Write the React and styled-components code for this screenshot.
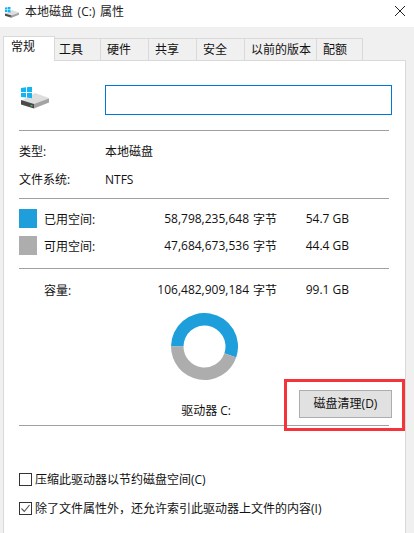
import React from "react";
import styled, { createGlobalStyle } from "styled-components";

const Global = createGlobalStyle`
  html, body { margin: 0; padding: 0; background: #fff; height: 533px; overflow: hidden; }
  body { font-family: "Open Sans", "Noto Sans CJK SC", sans-serif; font-size: 12px; color: #111; }
`;

const Window = styled.div`
  width: 414px; height: 533px; display: flex; flex-direction: column; background: #f0f0f0; overflow: hidden; position: relative;
`;
const TitleBar = styled.div`
  height: 27px; flex: none; background: #fff; display: flex; align-items: center; padding: 0 9px 3px 5px; box-sizing: border-box; gap: 6px;
`;
const TitleText = styled.span`
  flex: 1; font-size: 12px; line-height: 16px; color: #222; word-spacing: 1.5px;
`;
const TabStrip = styled.div`
  height: 33px; flex: none; display: flex; align-items: flex-end; padding: 0 0 0 3px; box-sizing: border-box; position: relative; z-index: 1;
`;
const Tab = styled.div`
  box-sizing: border-box;
  width: ${(p) => p.$w}px;
  height: ${(p) => (p.$active ? 25 : 23)}px;
  margin-bottom: -1px;
  margin-left: ${(p) => (p.$first ? 0 : -1)}px;
  padding-left: ${(p) => p.$pad}px;
  background: ${(p) => (p.$active ? "#fff" : "#f0f0f0")};
  border: 1px solid #d9d9d9;
  border-bottom: ${(p) => (p.$active ? "none" : "1px solid #d9d9d9")};
  font-size: 12px;
  line-height: ${(p) => (p.$active ? 20 : 22)}px;
  white-space: nowrap;
  position: relative;
  z-index: ${(p) => (p.$active ? 2 : 0)};
`;
const Panel = styled.div`
  flex: 1; margin: 0 8px 0 3px; background: #fff; border: 1px solid #d9d9d9; border-bottom: none; padding: 0 12px 0 15px; display: flex; flex-direction: column; box-sizing: border-box;
`;
const Header = styled.div`
  height: 69px; flex: none; display: flex; align-items: flex-start; padding-top: 24px; box-sizing: border-box;
`;
const IconSlot = styled.div`
  width: 86px; flex: none; padding: 2px 0 0 2px; box-sizing: border-box;
`;
const NameInput = styled.div`
  width: 287px; height: 30px; flex: none; box-sizing: border-box; border: 1px solid #0078d7; background: #fff;
`;
const Divider = styled.div`
  height: 1px; background: #a0a0a0; width: 370px; flex: none; margin-top: ${(p) => p.$top || 0}px;
`;
const InfoRow = styled.div`
  display: flex; align-items: center; height: 16px; margin-top: ${(p) => p.$top}px;
`;
const InfoLabel = styled.span`
  width: 86px; flex: none;
`;
const StatsRow = styled.div`
  display: grid; grid-template-columns: 18px 7px 105px 100px 28px 72px; align-items: center; height: 19px; margin-top: ${(p) => p.$top}px; width: 330px;
`;
const Swatch = styled.div`
  width: 18px; height: 19px; background: ${(p) => p.$color};
`;
const Label = styled.span`
  white-space: nowrap; grid-column: 3;
`;
const Bytes = styled.span`
  text-align: right; white-space: nowrap; grid-column: 4;
`;
const Unit = styled.span`
  text-align: right; grid-column: 5; white-space: nowrap;
`;
const Size = styled.span`
  text-align: right; grid-column: 6; white-space: nowrap;
`;
const DonutRow = styled.div`
  display: flex; justify-content: center; margin-top: 14px; width: 371px; flex: none;
`;
const DriveRow = styled.div`
  display: flex; align-items: flex-start; justify-content: flex-end; height: 35px; margin-top: 10px; width: 373px; flex: none;
`;
const DriveLabel = styled.span`
  margin-right: 68px; margin-top: 13px; line-height: 16px;
`;
const CleanButton = styled.div`
  width: 93px; height: 28px; box-sizing: border-box; background: #e1e1e1; border: 1px solid #adadad; text-align: center; line-height: 26px; font-size: 12px;
`;
const CheckRow = styled.div`
  display: flex; align-items: center; gap: 3px; height: 16px; margin-top: ${(p) => p.$top}px; white-space: nowrap;
`;
const Check = styled.div`
  width: 13px; height: 13px; box-sizing: border-box; border: 1px solid #333; background: #fff; display: flex; flex: none;
`;
const Highlight = styled.div`
  position: absolute; left: 284px; top: 379px; width: 121px; height: 52px; box-sizing: border-box; border: 3px solid #f5333a; pointer-events: none; z-index: 5;
`;
const CloseIcon = styled.svg`
  width: 10px; height: 10px; flex: none; margin-bottom: 2px;
`;
const DiskSvg = styled.svg`
  display: block; flex: none;
`;

function DiskIcon({ size }) {
  return (
    <DiskSvg width={size} height={size * 22 / 28} viewBox="0 0 28 22">
      <polygon points="0,14 14,6 28,11 28,13 14,19 0,14" fill="#dedede" />
      <polygon points="13,17 28,11.5 28,15.5 13,21.5" fill="#a3a3a3" />
      <polygon points="0,13 13,17 13,21.5 0,17.5" fill="#4a4a4a" />
      <rect x="9.5" y="18" width="2" height="1.4" fill="#3fbf6a" />
      <polygon points="0,1 5,0.3 5,5 0,5" fill="#13b4f2" />
      <polygon points="6,0.2 11,-0.5 11,5 6,5" fill="#13b4f2" />
      <polygon points="0,6 5,6 5,10.5 0,10" fill="#13b4f2" />
      <polygon points="6,6 11,6 11,11.2 6,10.6" fill="#13b4f2" />
    </DiskSvg>
  );
}

function Donut() {
  const cx = 33.5, cy = 33.5, R = 33.5, r = 21;
  const p = (rad, deg) => {
    const a = (deg * Math.PI) / 180;
    return `${(cx + rad * Math.sin(a)).toFixed(2)} ${(cy - rad * Math.cos(a)).toFixed(2)}`;
  };
  const seg = (a, b, large) =>
    `M${p(R, a)} A${R} ${R} 0 ${large} 1 ${p(R, b)} L${p(r, b)} A${r} ${r} 0 ${large} 0 ${p(r, a)}Z`;
  return (
    <svg width="67" height="67" viewBox="0 0 67 67">
      <path d={seg(270, 469, 1)} fill="#1e9fdc" />
      <path d={seg(109, 270, 0)} fill="#adadad" />
    </svg>
  );
}

const tabs = [
  ["常规", 52, 7],
  ["工具", 47, 4],
  ["硬件", 49, 6],
  ["共享", 49, 6],
  ["安全", 49, 6],
  ["以前的版本", 73, 6],
  ["配额", 47, 6],
];

export default function App() {
  return (
    <Window>
      <Global />
      <TitleBar>
        <DiskIcon size={14} />
        <TitleText>本地磁盘 (C:) 属性</TitleText>
        <CloseIcon viewBox="0 0 10 10">
          <path d="M0 0 L10 10 M10 0 L0 10" stroke="#222" strokeWidth="1" fill="none" />
        </CloseIcon>
      </TitleBar>
      <TabStrip>
        {tabs.map(([t, w, pad], i) => (
          <Tab key={t} $w={w} $pad={pad} $active={i === 0} $first={i === 0}>{t}</Tab>
        ))}
      </TabStrip>
      <Panel>
        <Header>
          <IconSlot><DiskIcon size={28} /></IconSlot>
          <NameInput />
        </Header>
        <Divider />
        <InfoRow $top={12}><InfoLabel>类型:</InfoLabel><span>本地磁盘</span></InfoRow>
        <InfoRow $top={12}><InfoLabel>文件系统:</InfoLabel><span>NTFS</span></InfoRow>
        <Divider $top={11} />
        <StatsRow $top={10}>
          <Swatch $color="#1e9fdc" />
          <Label>已用空间:</Label>
          <Bytes>58,798,235,648</Bytes>
          <Unit>字节</Unit>
          <Size>54.7 GB</Size>
        </StatsRow>
        <StatsRow $top={8}>
          <Swatch $color="#adadad" />
          <Label>可用空间:</Label>
          <Bytes>47,684,673,536</Bytes>
          <Unit>字节</Unit>
          <Size>44.4 GB</Size>
        </StatsRow>
        <Divider $top={13} />
        <StatsRow $top={11}>
          <Label>容量:</Label>
          <Bytes>106,482,909,184</Bytes>
          <Unit>字节</Unit>
          <Size>99.1 GB</Size>
        </StatsRow>
        <DonutRow><Donut /></DonutRow>
        <DriveRow>
          <DriveLabel>驱动器 C:</DriveLabel>
          <CleanButton>磁盘清理(D)</CleanButton>
        </DriveRow>
        <Divider />
        <CheckRow $top={45}><Check />压缩此驱动器以节约磁盘空间(C)</CheckRow>
        <CheckRow $top={13}>
          <Check>
            <svg width="11" height="11" viewBox="0 0 11 11">
              <path d="M1.5 5.5 L4.3 8.5 L9.5 2" stroke="#555" strokeWidth="1.1" fill="none" />
            </svg>
          </Check>
          除了文件属性外，还允许索引此驱动器上文件的内容(I)
        </CheckRow>
      </Panel>
      <Highlight />
    </Window>
  );
}
